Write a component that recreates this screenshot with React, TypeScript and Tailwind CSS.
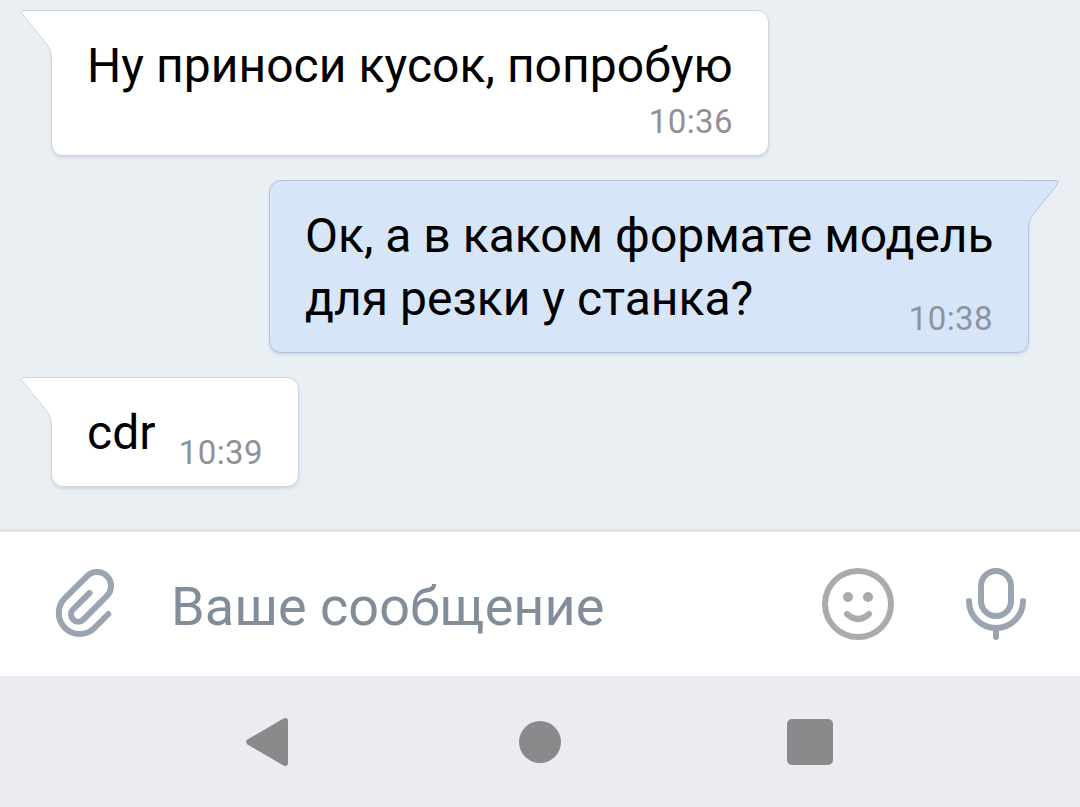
import React, { useState } from 'react';
import clsx from 'clsx';

interface Message {
  id: number;
  lines: string[];
  time: string;
  outgoing?: boolean;
  // time sits on its own row under the text
  timeBelow?: boolean;
  size: string;
}

const MESSAGES: Message[] = [
  { id: 1, lines: ['Ну приноси кусок, попробую'], time: '10:36', timeBelow: true, size: 'w-[718px] h-[146px]' },
  { id: 2, lines: ['Ок, а в каком формате модель', 'для резки у станка?'], time: '10:38', outgoing: true, size: 'w-[760px] h-[173px]' },
  { id: 3, lines: ['cdr'], time: '10:39', size: 'w-[248px] h-[110px]' },
];

const Tail: React.FC<{ outgoing?: boolean }> = ({ outgoing }) => (
  <svg
    width="48"
    height="60"
    viewBox="0 0 48 60"
    fill="none"
    className={clsx('absolute -top-px', outgoing ? '-right-[32px] -scale-x-100' : '-left-[32px]')}
  >
    <path
      d="M48 .5H4Q.6 .5 2.3 4L27 34.5Q31.5 40 31.5 51V60H48Z"
      className={outgoing ? 'fill-[#d6e6f8]' : 'fill-white'}
    />
    <path
      d="M48 .5H4Q.6 .5 2.3 4L27 34.5Q31.5 40 31.5 51V60"
      className={outgoing ? 'stroke-[#b4c3dc]' : 'stroke-[#d0d5dc]'}
    />
  </svg>
);

const Bubble: React.FC<{ message: Message }> = ({ message }) => {
  const { lines, time, outgoing, timeBelow, size } = message;

  return (
    <div
      className={clsx(
        'relative shrink-0 border px-[35px] pt-[23px] shadow-[0_2px_3px_rgba(120,135,165,0.22)]',
        size,
        outgoing
          ? 'self-end rounded-[12px] rounded-tr-none border-[#b4c3dc] bg-[#d6e6f8]'
          : 'self-start rounded-[12px] rounded-tl-none border-[#d0d5dc] bg-white'
      )}
    >
      <Tail outgoing={outgoing} />
      <div
        className={clsx(
          'relative whitespace-nowrap text-[48px] leading-[63px] text-black',
          timeBelow && 'tracking-[0.04px]'
        )}
      >
        {lines.map((line) => (
          <p key={line}>{line}</p>
        ))}
      </div>
      <div
        className={clsx(
          'relative text-right text-[33px] leading-[40px] tracking-[0.4px]',
          timeBelow ? 'mt-[5px]' : '-mt-[31px]',
          outgoing ? 'text-[#8c959f]' : 'text-[#909196]'
        )}
      >
        {time}
      </div>
    </div>
  );
};

const PaperclipIcon = () => (
  <svg width="60" height="70" viewBox="25 19 60 70" fill="none" stroke="#9ba4b1" strokeWidth="6" strokeLinecap="round" strokeLinejoin="round">
    <path d="M78.3 64L64.5 77.8A20.5 20.5 0 0 1 34.9 48.2L57.1 26.1A13.5 13.5 0 0 1 76.9 45.9L53.3 69.6A7 7 0 0 1 43.1 59.4L59.6 43" />
  </svg>
);

const SmileIcon = () => (
  <svg width="72" height="72" viewBox="0 0 72 72" fill="none" stroke="#a9abae" strokeWidth="6" strokeLinecap="round">
    <circle cx="36" cy="36" r="33" />
    <circle cx="26" cy="29" r="5" fill="#a9abae" stroke="none" />
    <circle cx="46" cy="29" r="5" fill="#a9abae" stroke="none" />
    <path d="M25 46Q36 56 47 46" />
  </svg>
);

const MicIcon = () => (
  <svg width="60" height="72" viewBox="0 0 60 72" fill="none" stroke="#9ba4b1" strokeWidth="6" strokeLinecap="round">
    <rect x="15" y="3" width="30" height="45" rx="15" />
    <path d="M3 33C3 48 15 60 30 60S57 48 57 33" />
    <path d="M30 60V69" />
  </svg>
);

const Composer = () => {
  const [text, setText] = useState('');

  return (
    <form
      onSubmit={(e) => e.preventDefault()}
      className="flex h-[147px] shrink-0 items-center border-t-[3px] border-[#dfe2e7] bg-white pl-[55px] pr-[54px]"
    >
      <button type="button" aria-label="Прикрепить" className="mr-[56px]">
        <PaperclipIcon />
      </button>
      <input
        type="text"
        value={text}
        onChange={(e) => setText(e.target.value)}
        placeholder="Ваше сообщение"
        className="h-[72px] min-w-0 flex-1 bg-transparent pt-[4px] text-[54px] tracking-[0.06px] text-black outline-none placeholder:text-[#818e9a]"
      />
      <button type="button" aria-label="Эмодзи" className="mr-[72px]">
        <SmileIcon />
      </button>
      <button type="button" aria-label="Голосовое сообщение">
        <MicIcon />
      </button>
    </form>
  );
};

const SystemNav = () => (
  <nav className="flex h-[131px] shrink-0 items-center bg-[#ebecf0] pl-[246px] text-[#898a8c]">
    <svg width="42" height="48" viewBox="0 0 42 48" fill="currentColor">
      <path d="M37 .8Q42 -1.5 42 3.5V44.5Q42 49.5 37 47.2L1.5 26.5Q-1.5 24 1.5 21.5Z" />
    </svg>
    <span className="ml-[231px] size-[42px] rounded-full bg-[#898a8c]" />
    <span className="ml-[226px] size-[46px] rounded-[5px] bg-[#898a8c]" />
  </nav>
);

const App: React.FC = () => {
  return (
    <div className="flex h-[807px] w-[1080px] flex-col overflow-hidden bg-[#eaeff4] font-['Roboto',sans-serif]">
      <main className="flex h-[529px] shrink-0 flex-col gap-6 px-[51px] pt-[10px]">
        {MESSAGES.map((message) => (
          <Bubble key={message.id} message={message} />
        ))}
      </main>
      <Composer />
      <SystemNav />
    </div>
  );
};

export default App;
